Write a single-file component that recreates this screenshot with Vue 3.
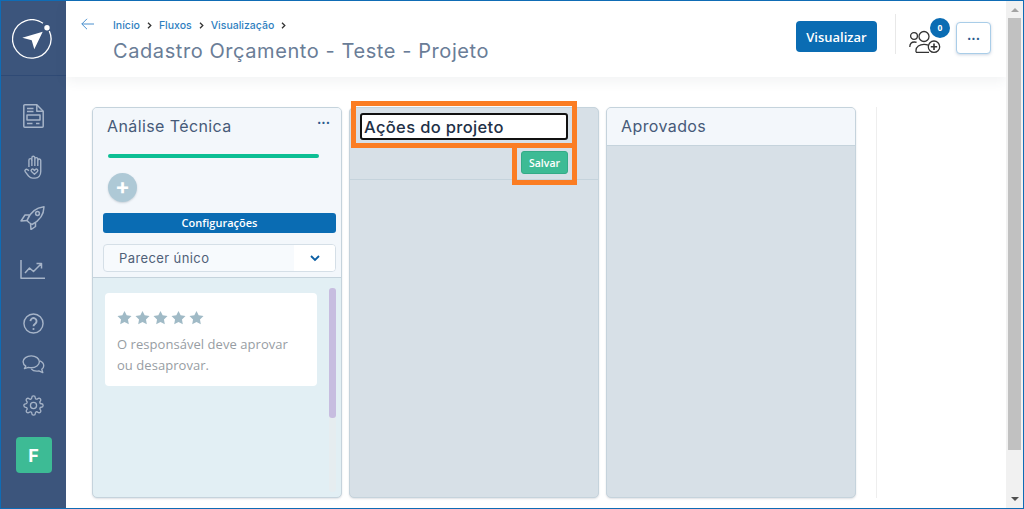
<script setup>
const crumbs = ['Início', 'Fluxos', 'Visualização'];
const stars = [1, 2, 3, 4, 5];
</script>

<template>
	<div class="window">
		<aside class="sidebar">
			<div class="sidebar__logo">
				<svg width="40" height="40" viewBox="0 0 40 40" fill="none">
					<path d="M37.300 12A19.200 19.200 0 1 1 31 4.300" stroke="#fff" stroke-width="1.300" />
					<circle cx="35" cy="8.700" r="2.700" fill="#fff" />
					<path d="M10.300 18.700 30.700 12.700 22.300 30.300 19.700 21.300Z" fill="#fff" />
				</svg>
			</div>
			<nav class="sidebar__nav">
				<svg class="nav-icon" width="21" height="24" viewBox="0 0 21 24" fill="none">
					<path d="M1.800 .8h12l6.400 6.400v15a1 1 0 0 1-1 1H1.800a1 1 0 0 1-1-1V1.800a1 1 0 0 1 1-1Z" />
					<path d="M13.800 .8v6.400h6.400M4 4.500h6.500M4 7.500h6.500M4 19.500h5.500M13 19.500h3.500" />
					<rect x="4" y="11" width="13" height="5" />
				</svg>
				<svg class="nav-icon" width="22" height="24" viewBox="0 0 22 26" fill="none">
					<path d="M5.500 13V5.500a1.600 1.600 0 0 1 3.200 0V3a1.600 1.600 0 0 1 3.200 0v1.500a1.600 1.600 0 0 1 3.200 0V6a1.600 1.600 0 0 1 3.200 0v12c0 4-2.500 7-6 7h-2.800c-2 0-3.200-1-4.400-2.300L1.600 18.300a1.700 1.700 0 0 1 2.400-2.400L5.500 17" />
					<path d="M8.700 5.500V12M11.900 4.500V12M15.100 6V12" />
					<path d="M11.500 21 8.300 17.800c-1.400-1.600.8-3.500 2.200-2.100l1 1 1-1c1.400-1.400 3.600.5 2.200 2.100Z" />
				</svg>
				<svg class="nav-icon nav-icon--shift" width="25" height="24" viewBox="0 0 25 24" fill="none">
					<path d="M9 16.500 7 14.500C9.500 8 15 1.800 24 .8 23.800 9.800 18 15.500 12 18.500Z" />
					<circle cx="17.500" cy="7.500" r="1.900" />
					<path d="M9.500 9H5L1 15l6.500-.5M15.500 17v3.500L11 23.500l-.5-6" />
				</svg>
				<svg class="nav-icon nav-icon--shift nav-icon--chart" width="25" height="19" viewBox="0 0 25 19" fill="none">
					<path d="M1 0v18.200h24" />
					<path d="M5 13l4.500-5 4 3.500L21 4M16.500 3.500h5v5" />
				</svg>
			</nav>
			<div class="sidebar__bottom">
				<svg class="nav-icon" width="21" height="21" viewBox="0 0 22 22" fill="none">
					<circle cx="11" cy="11" r="10" />
					<path d="M7.800 8.500a3.200 3.200 0 1 1 5 2.700c-1.100.8-1.800 1.300-1.800 2.800" stroke-width="2" />
					<circle class="nav-icon__dot" cx="11" cy="16.800" r="1.100" />
				</svg>
				<svg class="nav-icon" width="25" height="19" viewBox="0 0 25 21" fill="none">
					<path d="M10 1C5 1 1 4 1 7.500c0 2 1.200 3.700 3 4.800L2.500 15l4.300-1.300c1 .3 2 .4 3.200.4 5 0 9-3 9-6.600S15 1 10 1Z" />
					<path d="M19.500 6.500c2.600 1 4.300 3 4.300 5.300 0 1.600-.8 3-2.200 4l1.200 3.700-4.400-2c-.8.200-1.500.3-2.400.3-2.500 0-4.800-1-6-2.500" />
				</svg>
				<svg class="nav-icon" width="21" height="21" viewBox="0 0 24 24" fill="none">
					<circle cx="12" cy="12" r="3.500" />
					<path d="M19.400 15a1.650 1.650 0 0 0 .33 1.820l.06.06a2 2 0 0 1 0 2.830 2 2 0 0 1-2.830 0l-.06-.06a1.650 1.650 0 0 0-1.820-.33 1.650 1.650 0 0 0-1 1.510V21a2 2 0 0 1-2 2 2 2 0 0 1-2-2v-.09A1.650 1.650 0 0 0 9 19.400a1.650 1.650 0 0 0-1.820.33l-.06.06a2 2 0 0 1-2.830 0 2 2 0 0 1 0-2.830l.06-.06a1.650 1.650 0 0 0 .33-1.820 1.650 1.650 0 0 0-1.510-1H3a2 2 0 0 1-2-2 2 2 0 0 1 2-2h.09A1.650 1.650 0 0 0 4.600 9a1.650 1.650 0 0 0-.33-1.820l-.06-.06a2 2 0 0 1 0-2.830 2 2 0 0 1 2.830 0l.06.06a1.650 1.650 0 0 0 1.820.33H9a1.650 1.650 0 0 0 1-1.510V3a2 2 0 0 1 2-2 2 2 0 0 1 2 2v.09a1.650 1.650 0 0 0 1 1.510 1.650 1.650 0 0 0 1.820-.33l.06-.06a2 2 0 0 1 2.830 0 2 2 0 0 1 0 2.830l-.06.06a1.650 1.650 0 0 0-.33 1.820V9a1.650 1.650 0 0 0 1.510 1H21a2 2 0 0 1 2 2 2 2 0 0 1-2 2h-.09a1.650 1.650 0 0 0-1.510 1z" />
				</svg>
				<div class="sidebar__avatar">F</div>
			</div>
		</aside>

		<div class="content">
			<header class="topbar">
				<svg class="topbar__back" width="13" height="12" viewBox="0 0 13 12" fill="none">
					<path d="M13 6H.8M6 .8.800 6 6 11.200" />
				</svg>
				<div class="topbar__titles">
					<div class="breadcrumb">
						<template v-for="crumb in crumbs" :key="crumb">
							<span class="breadcrumb__link">{{ crumb }}</span>
							<svg class="breadcrumb__sep" width="5" height="7" viewBox="0 0 5 7" fill="none">
								<path d="M1 .8 3.800 3.500 1 6.200" />
							</svg>
						</template>
					</div>
					<h1 class="topbar__title">Cadastro Orçamento - Teste - Projeto</h1>
				</div>
				<button class="btn-view">Visualizar</button>
				<div class="topbar__divider"></div>
				<div class="members">
					<svg width="33" height="24" viewBox="0 0 33 24" fill="none">
						<circle cx="5" cy="6" r="3.400" />
						<circle cx="15" cy="6.500" r="5" />
						<path d="M.8 17c0-3 1.800-5 4.700-5 .8 0 1.500.1 2.100.4M7 22.300v-2c0-3.500 3.500-6 8-6 1.600 0 3 .3 4.200.8M7 22.300h13" />
						<circle cx="25" cy="16.700" r="5.700" />
						<path d="M25 13.500v6.400M21.800 16.700h6.400" stroke-width="1.600" />
					</svg>
					<span class="members__badge">0</span>
				</div>
				<button class="btn-more">···</button>
			</header>

			<main class="board">
				<section class="column column--first">
					<div class="column__head column__head--first">
						<div class="column__title-row">
							<h2 class="column__title">Análise Técnica</h2>
							<span class="column__dots">···</span>
						</div>
						<div class="progress"></div>
						<div class="add-btn">+</div>
						<button class="btn-config">Configurações</button>
						<div class="select">
							<span class="select__label">Parecer único</span>
							<span class="select__arrow">
								<svg width="10" height="7" viewBox="0 0 10 7" fill="none">
									<path d="M1 1l4 4 4-4" />
								</svg>
							</span>
						</div>
					</div>
					<div class="column__body">
						<div class="rule-card">
							<div class="rule-card__stars">
								<svg v-for="star in stars" :key="star" width="15" height="15" viewBox="0 0 16 15">
									<path d="M8 .5l2.300 4.700 5.200.8-3.800 3.600.9 5.200L8 12.400l-4.600 2.400.9-5.200L.5 6l5.200-.8Z" />
								</svg>
							</div>
							<p class="rule-card__text">O responsável deve aprovar ou desaprovar.</p>
						</div>
						<div class="scroll">
							<div class="scroll__thumb"></div>
						</div>
					</div>
				</section>

				<section class="column">
					<div class="edit-head">
						<input class="edit-head__input" value="Ações do projeto" />
						<button class="btn-save">Salvar</button>
					</div>
				</section>

				<section class="column">
					<div class="column__head">
						<h2 class="column__title">Aprovados</h2>
					</div>
				</section>

				<div class="board__end"></div>

				<!-- marcações laranja da captura -->
				<div class="mark mark--input"></div>
				<div class="mark mark--save"></div>
			</main>
		</div>

		<div class="scrollbar">
			<span class="scrollbar__arrow scrollbar__arrow--up"></span>
			<div class="scrollbar__thumb"></div>
			<span class="scrollbar__arrow scrollbar__arrow--down"></span>
		</div>
	</div>
</template>

<style>
html,
body {
	margin: 0;
	overflow: hidden;
}
</style>

<style scoped>
.window {
	display: flex;
	box-sizing: border-box;
	width: 1024px;
	height: 509px;
	overflow: hidden;
	border: 1px solid #0f6cb5;
	background: #fff;
	font-family: "Open Sans", sans-serif;
}
.sidebar {
	display: flex;
	flex-direction: column;
	flex: none;
	width: 65px;
	background: #3c557c;
}
.sidebar__logo {
	display: flex;
	align-items: center;
	justify-content: center;
	box-sizing: border-box;
	height: 75px;
	padding: 1px 3px 0 0;
	border-bottom: 1px solid #2f4a75;
}
.sidebar__nav {
	display: flex;
	flex-direction: column;
	align-items: center;
	gap: 27px;
	padding-top: 28px;
}
.nav-icon--shift {
	margin-left: -2px;
}
.nav-icon--chart {
	margin-top: 3px;
}
.sidebar__bottom {
	display: flex;
	flex-direction: column;
	align-items: center;
	gap: 21px;
	margin-top: 34px;
}
.nav-icon {
	display: block;
	stroke: #a6b4c8;
	stroke-width: 1.500;
	stroke-linejoin: round;
}
.nav-icon__dot {
	fill: #a6b4c8;
	stroke: none;
}
.sidebar__avatar {
	display: flex;
	align-items: center;
	justify-content: center;
	width: 36px;
	height: 36px;
	border-radius: 4px;
	background: #3dbb95;
	color: #fff;
	font-family: "Inter", sans-serif;
	font-size: 18px;
	font-weight: 700;
}
.content {
	display: flex;
	flex-direction: column;
	flex: 1;
	min-width: 0;
}
.topbar {
	display: flex;
	align-items: flex-start;
	flex: none;
	box-sizing: border-box;
	height: 76px;
	padding: 0 15px;
	box-shadow: 0 4px 12px rgba(60, 70, 90, 0.07);
	position: relative;
}
.topbar__back {
	flex: none;
	margin-top: 17px;
	stroke: #4a90cf;
	stroke-width: 1;
}
.topbar__titles {
	flex: 1;
	margin-left: 19px;
	padding-top: 18px;
}
.breadcrumb {
	display: flex;
	align-items: center;
	height: 13px;
	font-family: "Inter", sans-serif;
	font-size: 10.500px;
	font-weight: 500;
	color: #2f7fbf;
}
.breadcrumb__sep {
	margin: 0 7px;
	stroke: #333;
	stroke-width: 1.300;
}
.topbar__title {
	margin: 7px 0 0;
	font-family: "Inter", sans-serif;
	font-size: 20px;
	font-weight: 400;
	line-height: 24px;
	letter-spacing: 0.58px;
	color: #6a7d97;
}
.btn-view {
	flex: none;
	width: 81px;
	height: 31px;
	margin-top: 20px;
	padding: 0;
	border: 0;
	border-radius: 4px;
	background: #0a6cb3;
	color: #fff;
	font-family: "Open Sans", sans-serif;
	font-size: 13px;
	font-weight: 600;
}
.topbar__divider {
	flex: none;
	width: 1px;
	height: 40px;
	margin: 13px 0 0 18px;
	background: #e8e8e8;
}
.members {
	position: relative;
	flex: none;
	width: 33px;
	height: 24px;
	margin: 29px 0 0 13px;
}
.members svg {
	display: block;
	stroke: #333;
	stroke-width: 1.300;
}
.members__badge {
	position: absolute;
	top: -12px;
	left: 21px;
	width: 20px;
	height: 20px;
	border-radius: 50%;
	background: #0a6cb3;
	color: #fff;
	font-size: 8.500px;
	font-weight: 700;
	line-height: 20px;
	text-align: center;
}
.btn-more {
	flex: none;
	width: 35px;
	height: 32px;
	margin: 21px 0 0 14px;
	padding: 0;
	border: 1px solid #a9cde8;
	border-radius: 4px;
	background: #fff;
	box-shadow: 0 1px 3px rgba(90, 120, 160, 0.3);
	color: #2a5a8c;
	font-family: "Inter", sans-serif;
	font-size: 13px;
	font-weight: 700;
	line-height: 26px;
}
.board {
	position: relative;
	display: flex;
	flex: 1;
	align-items: stretch;
	gap: 7px;
	box-sizing: border-box;
	padding: 30px 0 10px 26px;
	min-height: 0;
}
.column {
	display: flex;
	flex-direction: column;
	box-sizing: border-box;
	width: 250px;
	overflow: hidden;
	border: 1px solid #c5d3dc;
	border-radius: 5px;
	background: #d7e0e7;
	box-shadow: 0 1px 2px rgba(90, 100, 120, 0.2);
}
.column--first {
	background: #e2eff4;
}
.column__head {
	flex: none;
	box-sizing: border-box;
	height: 38px;
	padding: 8px 14px 0;
	border-bottom: 1px solid #c5d3dc;
	background: #f3f7fb;
}
.column__head--first {
	height: 170px;
	padding: 0 5px 0 10px;
}
.column__title-row {
	display: flex;
	justify-content: space-between;
	height: 39px;
	padding: 8px 0 0 4px;
	box-sizing: border-box;
}
.column__title {
	margin: 0;
	font-family: "Inter", sans-serif;
	font-size: 16px;
	font-weight: 400;
	line-height: 21px;
	letter-spacing: 0.4px;
	color: #465a78;
}
.column__dots {
	margin: -2px 6px 0 0;
	font-family: "Inter", sans-serif;
	font-size: 13px;
	font-weight: 700;
	color: #2a5a8c;
}
.progress {
	width: 211px;
	height: 4px;
	margin: 7px 0 0 5px;
	border-radius: 2px;
	background: #0cbf94;
}
.add-btn {
	width: 29px;
	height: 29px;
	margin: 15px 0 0 5px;
	border-radius: 50%;
	background: #aec9d6;
	box-shadow: 0 1px 2px rgba(80, 100, 120, 0.25);
	color: #fff;
	font-family: "Inter", sans-serif;
	font-size: 22px;
	font-weight: 700;
	line-height: 27px;
	text-align: center;
}
.btn-config {
	display: block;
	box-sizing: border-box;
	width: 233px;
	height: 20px;
	margin-top: 11px;
	padding: 0 0 2px;
	border: 0;
	border-radius: 3px;
	background: #0a6cb3;
	color: #fff;
	font-family: "Open Sans", sans-serif;
	font-size: 11px;
	font-weight: 600;
}
.select {
	display: flex;
	box-sizing: border-box;
	width: 233px;
	height: 28px;
	margin-top: 11px;
	overflow: hidden;
	border: 1px solid #d5dfe7;
	border-radius: 4px;
	background: #f7fafd;
}
.select__label {
	flex: 1;
	padding-left: 15px;
	font-family: "Inter", sans-serif;
	font-size: 13px;
	letter-spacing: 0.4px;
	line-height: 27px;
	color: #4f6078;
}
.select__arrow {
	display: flex;
	align-items: center;
	justify-content: center;
	width: 41px;
	box-sizing: border-box;
	background: #fff;
}
.select__arrow svg {
	stroke: #0a5ea3;
	stroke-width: 1.800;
}
.column__body {
	display: flex;
	flex: 1;
	min-height: 0;
	padding: 15px 0 6px 12px;
}
.rule-card {
	flex: none;
	box-sizing: border-box;
	width: 212px;
	height: 93px;
	padding: 17px 12px 0;
	border-radius: 4px;
	background: #fff;
}
.rule-card__stars {
	display: flex;
	gap: 3px;
}
.rule-card__stars path {
	fill: #a0bac6;
}
.rule-card__text {
	margin: 9px 0 0;
	font-size: 13px;
	line-height: 21px;
	letter-spacing: 0.05px;
	color: #979da3;
}
.scroll {
	flex: none;
	width: 7px;
	height: 204px;
	margin: -5px 0 0 12px;
	border-radius: 3px;
	background: #e6edf0;
}
.scroll__thumb {
	height: 130px;
	border-radius: 3px;
	background: #c7bde0;
}
.edit-head {
	display: flex;
	flex-direction: column;
	align-items: flex-end;
	flex: none;
	box-sizing: border-box;
	height: 72px;
	padding: 5px 30px 0 10px;
	border-bottom: 1px solid #c5d3dc;
}
.edit-head__input {
	box-sizing: border-box;
	width: 100%;
	height: 27px;
	padding: 0 2px;
	border: 2px solid #111;
	border-radius: 3px;
	outline: none;
	background: #fff;
	font-family: "Inter", sans-serif;
	font-size: 16.500px;
	font-weight: 500;
	letter-spacing: 0.35px;
	color: #1f3147;
}
.btn-save {
	flex: none;
	width: 47px;
	height: 23px;
	margin-top: 11px;
	padding: 0;
	border: 1px solid #34ab87;
	border-radius: 3px;
	background: #3dbb95;
	color: #fff;
	font-family: "Open Sans", sans-serif;
	font-size: 10.500px;
	font-weight: 600;
}
.board__end {
	width: 1px;
	margin-left: 13px;
	background: #eeeeee;
}
.mark {
	position: absolute;
	box-sizing: border-box;
	border: 5px solid #fb7d23;
}
.mark--input {
	top: 24px;
	left: 285px;
	width: 226px;
	height: 47px;
}
.mark--save {
	top: 66px;
	left: 446px;
	width: 65px;
	height: 42px;
}
.scrollbar {
	position: relative;
	flex: none;
	width: 17px;
	background: #f1f1f1;
}
.scrollbar__thumb {
	position: absolute;
	top: 17px;
	left: 2px;
	width: 13px;
	height: 432px;
	background: #c1c1c1;
}
.scrollbar__arrow {
	position: absolute;
	left: 5px;
	width: 0;
	height: 0;
	border-left: 4px solid transparent;
	border-right: 4px solid transparent;
}
.scrollbar__arrow--up {
	top: 7px;
	border-bottom: 4px solid #a3a3a3;
}
.scrollbar__arrow--down {
	bottom: 7px;
	border-top: 4px solid #505050;
}
</style>
